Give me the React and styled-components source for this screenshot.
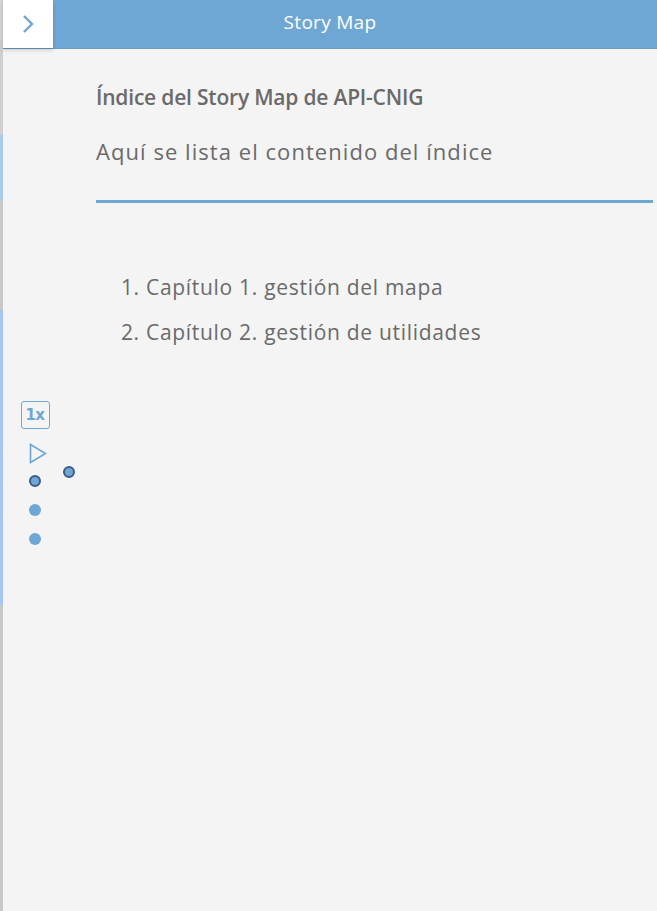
import React from 'react';
import styled, { createGlobalStyle } from 'styled-components';

const GlobalStyle = createGlobalStyle`
  html, body {
    margin: 0;
    padding: 0;
    overflow: hidden;
    background: #f4f4f4;
  }
`;

// thin slice of the map that peeks out at the left edge
const mapSegments = [
  { h: 40, c: '#d6d6d6' },
  { h: 95, c: '#cfcfcf' },
  { h: 65, c: '#a9c9ef' },
  { h: 110, c: '#c9c9c9' },
  { h: 295, c: '#a5c6f0' },
  { h: 306, c: '#c8c8c8' }
];

const chapters = ['Capítulo 1. gestión del mapa', 'Capítulo 2. gestión de utilidades'];

const App = () => {
  return (
    <Page>
      <GlobalStyle />
      <MapStrip>
        {mapSegments.map((s, i) => (
          <MapSegment key={i} style={{ height: s.h, background: s.c }} />
        ))}
      </MapStrip>
      <Panel>
        <Header>
          <ToggleButton>
            <svg width="14" height="20" viewBox="0 0 14 20">
              <path d="M3 2 L11 10 L3 18" fill="none" stroke="#6fa7d4" strokeWidth="2.4" />
            </svg>
          </ToggleButton>
          <HeaderTitle>Story Map</HeaderTitle>
        </Header>
        <Body>
          <Gutter>
            <Controls>
              <SpeedButton>1x</SpeedButton>
              <PlayButton>
                <svg width="18" height="21" viewBox="0 0 18 21">
                  <path d="M1.5 1.5 L16.5 10.5 L1.5 19.5 Z" fill="none" stroke="#6fa7d4" strokeWidth="1.6" strokeLinejoin="miter" />
                </svg>
              </PlayButton>
              <Dot $active />
              <Dot />
              <Dot />
            </Controls>
            <FloatingDot />
          </Gutter>
          <Content>
            <Title>Índice del Story Map de API-CNIG</Title>
            <Subtitle>Aquí se lista el contenido del índice</Subtitle>
            <Divider />
            <ChapterList>
              {chapters.map(c => (
                <Chapter key={c}>{c}</Chapter>
              ))}
            </ChapterList>
          </Content>
        </Body>
      </Panel>
    </Page>
  );
};

const Page = styled.div`
  display: flex;
  width: 657px;
  height: 911px;
  font-family: 'Open Sans', 'Noto Sans', sans-serif;
`;

const MapStrip = styled.div`
  width: 3px;
  display: flex;
  flex-direction: column;
`;

const MapSegment = styled.div`
  width: 100%;
`;

const Panel = styled.div`
  position: relative;
  flex: 1;
  display: flex;
  flex-direction: column;
  background: #f4f4f4;
`;

const Header = styled.div`
  height: 48px;
  background: #6fa7d4;
  border-bottom: 1px solid #6a9cc6;
  display: flex;
  align-items: center;
  justify-content: center;
`;

const ToggleButton = styled.div`
  position: absolute;
  top: 0;
  left: 0;
  width: 50px;
  height: 48px;
  background: #ffffff;
  display: flex;
  align-items: center;
  justify-content: center;
  box-shadow: 0 2px 4px rgba(0, 0, 0, 0.18);
`;

const HeaderTitle = styled.div`
  color: #ffffff;
  font-size: 19px;
  letter-spacing: 0.3px;
  margin-top: -4px;
`;

const Body = styled.div`
  flex: 1;
  display: flex;
`;

const Gutter = styled.div`
  position: relative;
  width: 93px;
  flex-shrink: 0;
`;

const Controls = styled.div`
  display: flex;
  flex-direction: column;
  align-items: center;
  width: 30px;
  margin: 352px 0 0 17px;
`;

const SpeedButton = styled.div`
  box-sizing: border-box;
  width: 29px;
  height: 28px;
  border: 1px solid #6fa7d4;
  border-radius: 3px;
  color: #6fa7d4;
  font-family: 'DejaVu Sans', sans-serif;
  font-weight: bold;
  font-size: 15px;
  letter-spacing: -0.5px;
  display: flex;
  align-items: center;
  justify-content: center;
`;

const PlayButton = styled.div`
  margin: 14px 0 0 5px;
  height: 22px;
`;

const Dot = styled.div`
  box-sizing: border-box;
  width: 12px;
  height: 12px;
  border-radius: 50%;
  background: #6fa7d4;
  border: ${({ $active }) => ($active ? '2px solid #3b5a85' : 'none')};
  margin-top: ${({ $active }) => ($active ? '10px' : '17px')};
`;

const FloatingDot = styled(Dot)`
  position: absolute;
  top: 417px;
  left: 60px;
  margin: 0;
  border: 2px solid #3b5a85;
`;

const Content = styled.div`
  flex: 1;
  padding: 33px 4px 0 0;
  color: #6a6a6a;
`;

const Title = styled.h1`
  margin: 0;
  font-size: 21px;
  font-weight: 600;
  letter-spacing: -0.2px;
  line-height: 30px;
`;

const Subtitle = styled.p`
  margin: 24px 0 0;
  font-size: 22px;
  letter-spacing: 1.05px;
  line-height: 30px;
`;

const Divider = styled.div`
  height: 3px;
  background: #6fa7d4;
  margin-top: 34px;
`;

const ChapterList = styled.ol`
  margin: 62px 0 0;
  padding-left: 50px;
  font-size: 21px;
  letter-spacing: 0.7px;
  line-height: 45px;
`;

const Chapter = styled.li``;

export default App;
